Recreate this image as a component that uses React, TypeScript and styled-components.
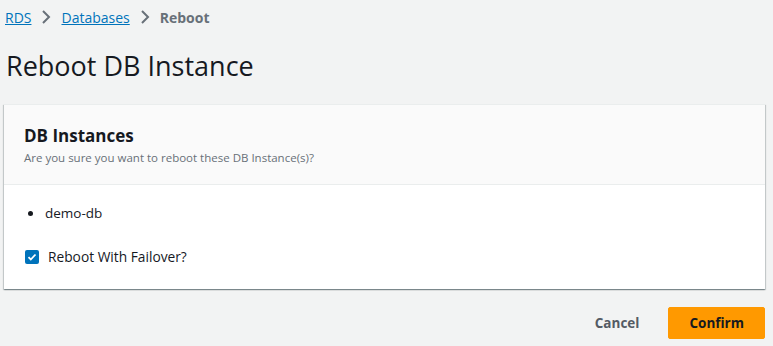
import styled, { createGlobalStyle } from "styled-components";

const GlobalStyle = createGlobalStyle`
  html, body {
    margin: 0;
    padding: 0;
    background: #f2f3f3;
    font-family: "Open Sans", "Noto Sans", Arial, sans-serif;
    color: #16191f;
  }`;

const Page = styled.div`
  width: 773px;
  height: 346px;
  box-sizing: border-box;
  padding: 6px 8px 0 4px;
  overflow: hidden;`;

const Breadcrumbs = styled.nav`
  display: flex;
  align-items: center;
  height: 22px;
  padding-left: 1px;
  font-size: 14px;`;

const Crumb = styled.a`
  color: #0073bb;
  text-decoration: underline;`;

const CurrentCrumb = styled.span`
  color: #687078;
  font-weight: 700;`;

const Chevron = styled.svg`
  width: 16px;
  height: 16px;
  margin: 0 7px;`;

const Title = styled.h1`
  margin: 20px 0 20px 2px;
  font-size: 27px;
  line-height: 36px;
  font-weight: 400;
  color: #16191f;`;

const Card = styled.section`
  background: #fff;
  border-top: 1px solid #eaeded;
  box-shadow: 0 1px 1px 0 rgba(0, 28, 36, 0.3), 1px 1px 1px 0 rgba(0, 28, 36, 0.15),
    -1px 1px 1px 0 rgba(0, 28, 36, 0.15);`;

const CardHeader = styled.header`
  background: #fafafa;
  border-bottom: 1px solid #eaeded;
  padding: 19px 20px 17px;`;

const CardTitle = styled.h2`
  margin: 0;
  font-size: 17px;
  line-height: 24px;
  font-weight: 700;`;

const CardDescription = styled.p`
  margin: 1px 0 0;
  font-size: 11.5px;
  line-height: 18px;
  color: #687078;`;

const CardBody = styled.div`
  padding: 16px 20px 21px;
  font-size: 13.5px;`;

const InstanceList = styled.ul`
  margin: 0 0 22px;
  padding-left: 21px;
  line-height: 22px;

  li::marker {
    font-size: 15px;
  }`;

const CheckRow = styled.label`
  display: flex;
  align-items: center;
  gap: 9px;
  line-height: 22px;
  font-size: 13.75px;
  padding-left: 1px;`;

const CheckBox = styled.span`
  width: 14px;
  height: 14px;
  border-radius: 2px;
  background: #0073bb;
  display: flex;
  align-items: center;
  justify-content: center;`;

const Footer = styled.div`
  display: flex;
  justify-content: flex-end;
  align-items: center;
  gap: 8px;
  margin-top: 18px;`;

const Button = styled.button<{ $primary?: boolean }>`
  height: 32px;
  padding: 0 20px;
  border-radius: 2px;
  border: 1px solid ${(p) => (p.$primary ? "#ff9900" : "transparent")};
  background: ${(p) => (p.$primary ? "#ff9900" : "transparent")};
  color: ${(p) => (p.$primary ? "#16191f" : "#545b64")};
  font-family: inherit;
  font-size: 13.5px;
  font-weight: 700;
  cursor: pointer;`;

export default function App() {
  return (
    <>
      <GlobalStyle />
      <Page>
        <Breadcrumbs>
          <Crumb href="#">RDS</Crumb>
          <Chevron viewBox="0 0 16 16">
            <path d="M5 2l6 6-6 6" fill="none" stroke="#687078" strokeWidth="2" />
          </Chevron>
          <Crumb href="#">Databases</Crumb>
          <Chevron viewBox="0 0 16 16">
            <path d="M5 2l6 6-6 6" fill="none" stroke="#687078" strokeWidth="2" />
          </Chevron>
          <CurrentCrumb>Reboot</CurrentCrumb>
        </Breadcrumbs>
        <Title>Reboot DB Instance</Title>
        <Card>
          <CardHeader>
            <CardTitle>DB Instances</CardTitle>
            <CardDescription>Are you sure you want to reboot these DB Instance(s)?</CardDescription>
          </CardHeader>
          <CardBody>
            <InstanceList>
              <li>demo-db</li>
            </InstanceList>
            <CheckRow>
              <CheckBox>
                <svg width="10" height="10" viewBox="0 0 10 10">
                  <path d="M1.5 5.2l2.3 2.3L8.5 2.5" fill="none" stroke="#fff" strokeWidth="1.8" />
                </svg>
              </CheckBox>
              Reboot With Failover?
            </CheckRow>
          </CardBody>
        </Card>
        <Footer>
          <Button>Cancel</Button>
          <Button $primary>Confirm</Button>
        </Footer>
      </Page>
    </>
  );
}
